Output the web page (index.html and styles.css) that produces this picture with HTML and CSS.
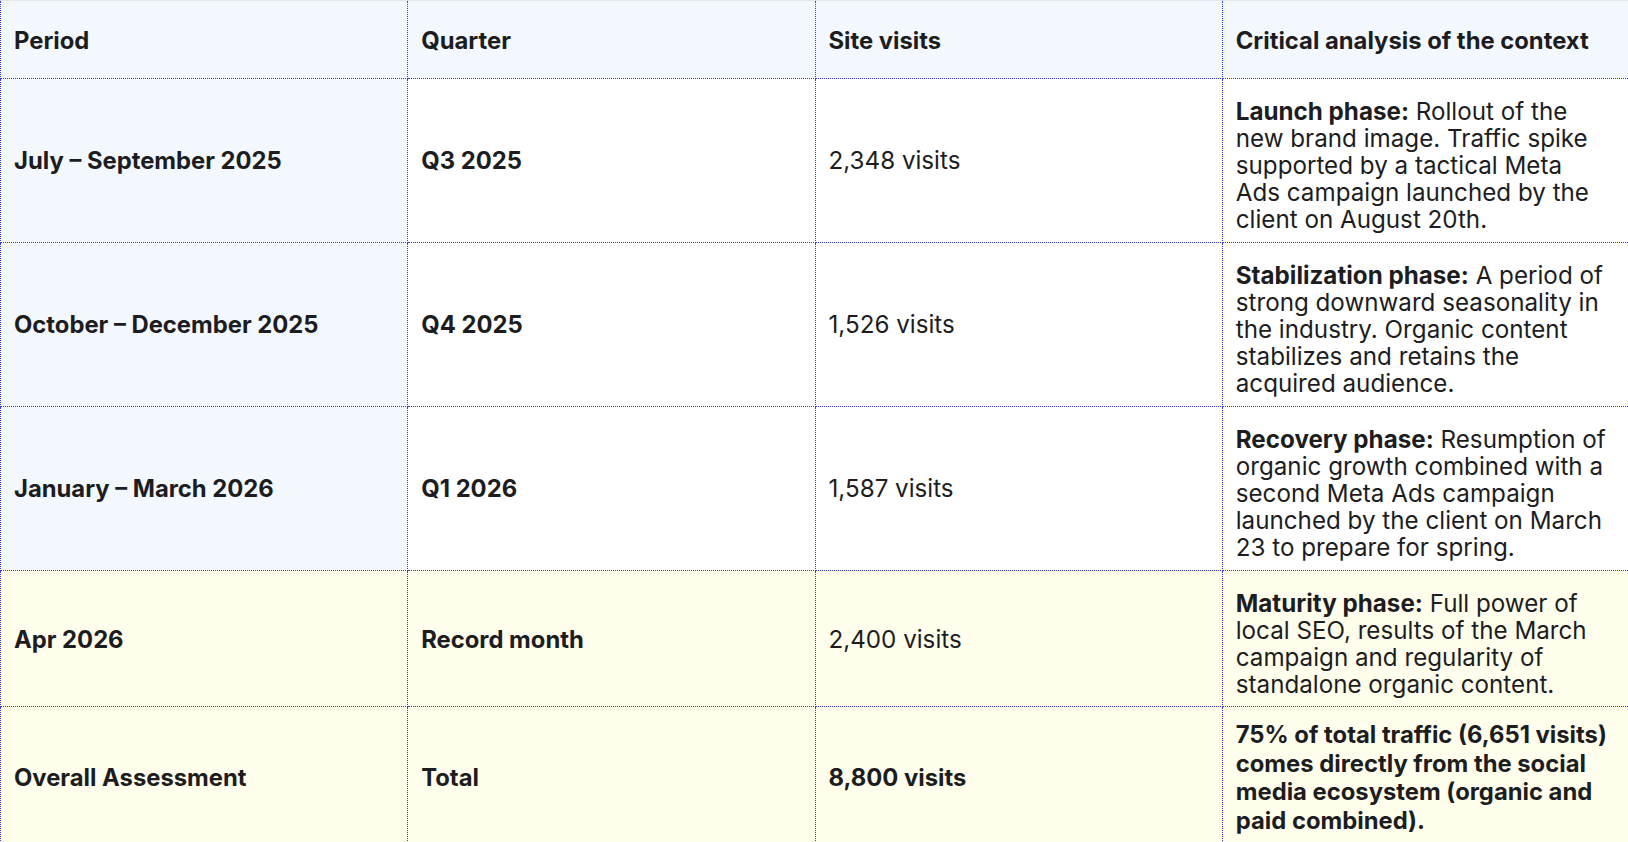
FILE: index.html
```html
<!DOCTYPE html>
<html lang="en">
<head>
<meta charset="utf-8">
<title>Traffic analysis</title>
<link rel="stylesheet" href="styles.css">
</head>
<body>
<div class="frame">
  <table class="traffic">
    <colgroup>
      <col class="c"><col class="c"><col class="c"><col class="c">
    </colgroup>
    <thead>
      <tr>
        <th class="head">Period</th>
        <th class="head">Quarter</th>
        <th class="head">Site visits</th>
        <th class="head">Critical analysis of the context</th>
      </tr>
    </thead>
    <tbody>
      <tr>
        <td class="label blue">July – September 2025</td>
        <td class="label">Q3 2025</td>
        <td class="value">2,348 visits</td>
        <td class="note"><strong>Launch phase:</strong> Rollout of the new brand image. Traffic spike supported by a tactical Meta Ads campaign launched by the client on August 20th.</td>
      </tr>
      <tr>
        <td class="label blue">October – December 2025</td>
        <td class="label">Q4 2025</td>
        <td class="value">1,526 visits</td>
        <td class="note"><strong>Stabilization phase:</strong> A period of strong downward seasonality in the industry. Organic content stabilizes and retains the acquired audience.</td>
      </tr>
      <tr>
        <td class="label blue">January – March 2026</td>
        <td class="label">Q1 2026</td>
        <td class="value">1,587 visits</td>
        <td class="note"><strong>Recovery phase:</strong> Resumption of organic growth combined with a second Meta Ads campaign launched by the client on March 23 to prepare for spring.</td>
      </tr>
      <tr class="yellow">
        <td class="label">Apr 2026</td>
        <td class="label">Record month</td>
        <td class="value">2,400 visits</td>
        <td class="note"><strong>Maturity phase:</strong> Full power of local SEO, results of the March campaign and regularity of standalone organic content.</td>
      </tr>
      <tr class="yellow total">
        <td class="label">Overall Assessment</td>
        <td class="label">Total</td>
        <td class="value bold">8,800 visits</td>
        <td class="note bold">75% of total traffic (6,651 visits) comes directly from the social media ecosystem (organic and paid combined).</td>
      </tr>
    </tbody>
  </table>
</div>
</body>
</html>
```
FILE: styles.css
```css
html, body {
  margin: 0;
  padding: 0;
  background: #ffffff;
}

body {
  font-family: "Inter", "Noto Sans", sans-serif;
  color: #1d1d1f;
  overflow: hidden;
}

.frame {
  width: 100vw;
  height: 100vh;
  overflow: hidden;
  border-top: 1px solid #e4e6ea;
  box-sizing: border-box;
}

.traffic {
  width: 1630px;
  table-layout: fixed;
  border-collapse: collapse;
  font-size: 23.8px;
  line-height: 27.2px;
}

.traffic .c {
  width: 25%;
}

.traffic th,
.traffic td {
  border: 1px dotted #3535ee;
  padding: 0 20px 0 13px;
  text-align: left;
}

.traffic tr:first-child th {
  border-top: none;
}

.head {
  height: 77px;
  box-sizing: border-box;
  padding-top: 3px !important;
  background: #f3f8ff;
  font-weight: 700;
  vertical-align: middle;
}

.label {
  font-weight: 700;
  vertical-align: middle;
  padding-top: 2px !important;
}

.value {
  font-size: 24.2px;
  font-weight: 400;
  vertical-align: middle;
  padding-top: 2px !important;
}

.bold {
  font-weight: 700;
}

.blue {
  background: #f3f8ff;
}

.note {
  font-size: 24.2px;
  vertical-align: top;
  padding-top: 19px !important;
  padding-bottom: 8px !important;
}

.note strong {
  font-weight: 700;
}

.yellow td {
  background: #fffeec;
}

.total .value {
  font-size: 23.8px;
}

.total .note {
  font-size: 23.8px;
  line-height: 28.5px;
  padding-top: 14px !important;
  padding-bottom: 11px !important;
}
```
